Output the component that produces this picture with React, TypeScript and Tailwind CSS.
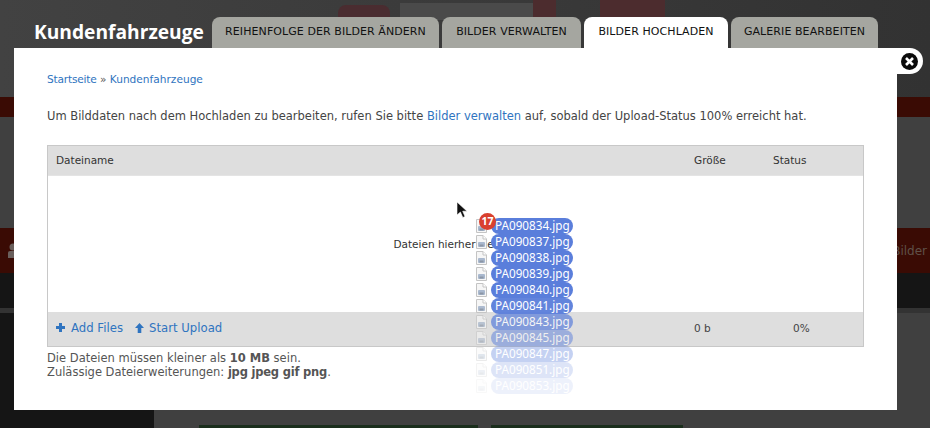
const files = [
  { name: "PA090834.jpg", fade: "opacity-100" },
  { name: "PA090837.jpg", fade: "opacity-100" },
  { name: "PA090838.jpg", fade: "opacity-100" },
  { name: "PA090839.jpg", fade: "opacity-100" },
  { name: "PA090840.jpg", fade: "opacity-100" },
  { name: "PA090841.jpg", fade: "opacity-95" },
  { name: "PA090843.jpg", fade: "opacity-70" },
  { name: "PA090845.jpg", fade: "opacity-50" },
  { name: "PA090847.jpg", fade: "opacity-35" },
  { name: "PA090851.jpg", fade: "opacity-20" },
  { name: "PA090853.jpg", fade: "opacity-10" },
];

function FileIcon() {
  return (
    <svg width="11" height="14" viewBox="0 0 11 14" className="shrink-0">
      <path d="M0.5 0.5H7L10.5 4V13.5H0.5Z" fill="#f6f6f6" stroke="#c4c4c4" />
      <path d="M7 0.5V4H10.5" fill="#fff" stroke="#c4c4c4" />
      <rect x="2" y="7" width="7" height="5" rx="1" fill="#a9b8ce" />
      <rect x="3.5" y="9.5" width="4" height="2" fill="#8c96a6" />
    </svg>
  );
}

function DragGhost() {
  return (
    <div className="absolute left-[476px] top-[218px] flex flex-col font-['Noto_Sans',sans-serif]">
      {files.map((file) => (
        <div key={file.name} className={`flex h-4 items-center gap-[4px] ${file.fade}`}>
          <FileIcon />
          <span className="flex h-[16px] w-[82px] items-center rounded-full bg-[#5a7edb] pl-[4px] text-[11.7px] text-white">
            {file.name}
          </span>
        </div>
      ))}
      <span className="absolute left-[3px] top-[-5px] flex h-[17px] w-[17px] items-center justify-center rounded-full bg-[#d9402f] text-[10.5px] font-bold text-white">
        17
      </span>
    </div>
  );
}

function Cursor() {
  return (
    <svg width="12" height="18" viewBox="0 0 12 18" className="absolute left-[456px] top-[201px]">
      <path d="M1 1V14L4.4 11L6.8 16.5L9 15.5L6.7 10.2H11Z" fill="#111" stroke="#fff" strokeWidth="0.6" />
    </svg>
  );
}

function Backdrop() {
  return (
    <div className="absolute inset-0 flex flex-col bg-[#404040]">
      <div className="relative h-[97px] bg-gradient-to-r from-[#424242] to-[#323232]">
        <div className="absolute left-[338px] top-[5px] h-[15px] w-[52px] rounded-t-lg bg-[#4a2c30]" />
        <div className="absolute left-[400px] top-[3px] h-[17px] w-[133px] bg-[#4a4a4a]" />
        <div className="absolute left-[533px] top-0 h-[20px] w-[23px] bg-[#4c2c2e]" />
        <div className="absolute left-[600px] top-0 h-[20px] w-[65px] bg-[#4c2c2e]" />
      </div>
      <div className="h-[20px] bg-[#3a0b04]" />
      <div className="h-[111px] bg-[#404040]" />
      <div className="flex h-[45px] items-center justify-between bg-[#3a0b04] pl-[8px] pr-[3px] text-[12px] text-[#5f5048]">
        <svg width="8" height="16" viewBox="0 0 8 16">
          <circle cx="5" cy="4" r="3.5" fill="#6a5f5c" />
          <path d="M0 9.5Q0 8 2 8H8V15H0Z" fill="#6a5f5c" />
        </svg>
        <span>Bilder</span>
      </div>
      <div className="h-[35px] bg-[#151515]" />
      <div className="h-[5px] bg-[#333]" />
      <div className="flex flex-1">
        <div className="w-[154px] bg-[#151515]" />
        <div className="flex flex-1 items-end gap-[13px] bg-[#404040] pl-[45px]">
          <div className="h-[3px] w-[279px] bg-[#1a2e1c]" />
          <div className="h-[3px] w-[192px] bg-[#1a2e1c]" />
        </div>
      </div>
    </div>
  );
}

const tabs = [
  { label: "REIHENFOLGE DER BILDER ÄNDERN", width: "w-[227px]", active: false },
  { label: "BILDER VERWALTEN", width: "w-[139px]", active: false },
  { label: "BILDER HOCHLADEN", width: "w-[144px]", active: true },
  { label: "GALERIE BEARBEITEN", width: "w-[147px]", active: false },
];

export default function App() {
  return (
    <div className="relative h-[428px] w-[930px] overflow-hidden font-['DejaVu_Sans',sans-serif] text-[11.5px] text-[#444]">
      <Backdrop />

      <div className="relative flex flex-col pl-[14px] pt-[17px]">
        <div className="flex h-[31px] items-center">
          <h1 className="-mt-[2px] ml-[20px] w-[178px] text-[19.2px] font-bold leading-none text-white font-['Open_Sans',sans-serif]">
            Kundenfahrzeuge
          </h1>
          <div className="flex h-full gap-[3px]">
            {tabs.map((tab) => (
              <div
                key={tab.label}
                className={`flex items-center justify-center rounded-t-lg text-[11px] tracking-[0.08px] text-[#111] ${tab.width} ${
                  tab.active ? "bg-white" : "bg-[#a5a6a0]"
                }`}
              >
                {tab.label}
              </div>
            ))}
          </div>
        </div>

        <div className="relative h-[362px] w-[883px] bg-white px-[33px] pt-[24px]">
          <div className="absolute left-full top-0 flex h-[26px] w-[26px] items-center justify-center rounded-r-[13px] bg-white">
            <svg width="17" height="17" viewBox="0 0 17 17" className="-ml-[1px]">
              <circle cx="8.5" cy="8.5" r="8.5" fill="#0b0b0b" />
              <path d="M5 5L12 12M12 5L5 12" stroke="#fff" strokeWidth="2.6" />
            </svg>
          </div>

          <p className="h-[14px] text-[10.6px] leading-[14px] text-[#2f74c0]">
            <span className="tracking-[-0.2px]">Startseite</span> <span className="text-[#555]">»</span> Kundenfahrzeuge
          </p>
          <p className="mt-[23px] h-[14px] whitespace-nowrap leading-[14px]">
            Um Bilddaten nach dem Hochladen zu bearbeiten, rufen Sie bitte{" "}
            <span className="text-[#2f74c0]">Bilder verwalten</span> auf, sobald der Upload-Status 100% erreicht hat.
          </p>

          <div className="mt-[22px] flex h-[202px] w-[817px] flex-col border border-[#c8c8c8]">
            <div className="flex h-[29px] items-center bg-[#dedede] pl-[8px] text-[10.5px] text-[#333]">
              <span className="flex-1">Dateiname</span>
              <span className="w-[79px]">Größe</span>
              <span className="w-[90px]">Status</span>
            </div>
            <div className="flex h-[137px] items-center justify-center border-t border-[#e4e4e4] pr-[4px] pt-[2px] text-[10.5px] text-[#333]">
              Dateien hierher ziehen
            </div>
            <div className="flex flex-1 items-center bg-[#dedede] pl-[8px] text-[11.7px] text-[#2f74c0]">
              <span className="flex items-center gap-[5px]">
                <svg width="11" height="11" viewBox="0 0 11 11" className="-ml-[1px] -mt-[2px]">
                  <path d="M4 1H7V4H10V7H7V10H4V7H1V4H4Z" fill="#2f74c0" />
                </svg>
                Add Files
              </span>
              <span className="ml-[11px] flex flex-1 items-center gap-[4px]">
                <svg width="11" height="12" viewBox="0 0 11 12" className="-mt-[2px]">
                  <path d="M5.5 1L10 6H7.3V11H3.7V6H1Z" fill="#2f74c0" />
                </svg>
                Start Upload
              </span>
              <span className="w-[99px] text-[10.5px] text-[#444]">0 b</span>
              <span className="w-[70px] text-[10.5px] text-[#444]">0%</span>
            </div>
          </div>

          <p className="mt-[4px] leading-[14px] text-[#555]">
            Die Dateien müssen kleiner als <b>10 MB</b> sein.
            <br />
            Zulässige Dateierweiterungen: <b className="tracking-[-0.2px]">jpg jpeg gif png</b>.
          </p>
        </div>
      </div>

      <Cursor />
      <DragGhost />
    </div>
  );
}
